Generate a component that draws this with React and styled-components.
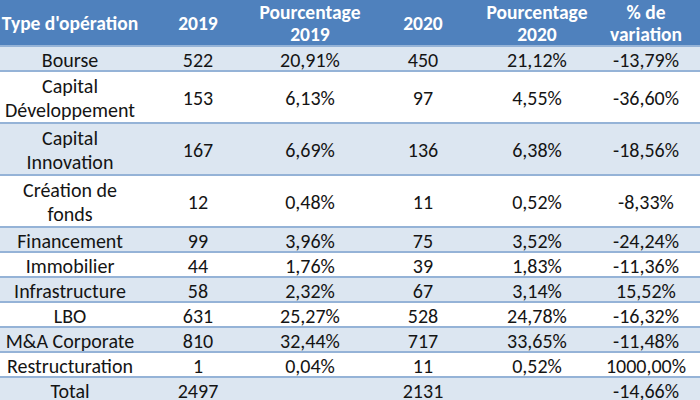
import React from 'react';
import styled, { createGlobalStyle } from 'styled-components';

const GlobalStyle = createGlobalStyle`
  html, body {
    margin: 0;
    padding: 0;
    background: #ffffff;
  }
  body {
    font-family: Carlito, Lato, "Liberation Sans", sans-serif;
  }
`;

const Table = styled.table`
  width: 700px;
  border-collapse: collapse;
  table-layout: fixed;
  font-size: 20px;
  color: #141414;
`;

const HeadRow = styled.tr`
  height: 46px;
  background: #4f81bd;
`;

const HeadCell = styled.th`
  width: ${(p) => p.w}px;
  padding: 1px 0 0;
  color: #ffffff;
  font-size: 19.5px;
  font-weight: 700;
  line-height: 22px;
  text-align: center;
  vertical-align: middle;
  white-space: nowrap;
`;

const Row = styled.tr`
  height: ${(p) => (p.tall ? 51 : 25)}px;
  background: ${(p) => (p.striped ? '#dce6f1' : '#ffffff')};
  border-top: 2px solid #95b3d7;
`;

const Cell = styled.td`
  padding: ${(p) => (p.tall ? 2 : 2)}px 0 0;
  line-height: ${(p) => (p.tall ? 24 : 20)}px;
  text-align: center;
  vertical-align: middle;
  white-space: nowrap;
`;

const widths = [140, 116, 108, 118, 110, 108];

const rows = [
  [['Bourse'], '522', '20,91%', '450', '21,12%', '-13,79%'],
  [['Capital', 'Développement'], '153', '6,13%', '97', '4,55%', '-36,60%'],
  [['Capital', 'Innovation'], '167', '6,69%', '136', '6,38%', '-18,56%'],
  [['Création de', 'fonds'], '12', '0,48%', '11', '0,52%', '-8,33%'],
  [['Financement'], '99', '3,96%', '75', '3,52%', '-24,24%'],
  [['Immobilier'], '44', '1,76%', '39', '1,83%', '-11,36%'],
  [['Infrastructure'], '58', '2,32%', '67', '3,14%', '15,52%'],
  [['LBO'], '631', '25,27%', '528', '24,78%', '-16,32%'],
  [['M&A Corporate'], '810', '32,44%', '717', '33,65%', '-11,48%'],
  [['Restructuration'], '1', '0,04%', '11', '0,52%', '1000,00%'],
  [['Total'], '2497', '', '2131', '', '-14,66%'],
];

const Lines = ({ parts }) =>
  parts.map((t, i) => (
    <React.Fragment key={i}>
      {i > 0 && <br />}
      {t}
    </React.Fragment>
  ));

const App = () => {
  return (
    <>
      <GlobalStyle />
      <Table>
        <thead>
          <HeadRow>
            <HeadCell w={widths[0]}>Type d'opération</HeadCell>
            <HeadCell w={widths[1]}>2019</HeadCell>
            <HeadCell w={widths[2]}>
              Pourcentage
              <br />
              2019
            </HeadCell>
            <HeadCell w={widths[3]}>2020</HeadCell>
            <HeadCell w={widths[4]}>
              Pourcentage
              <br />
              2020
            </HeadCell>
            <HeadCell w={widths[5]}>
              % de
              <br />
              variation
            </HeadCell>
          </HeadRow>
        </thead>
        <tbody>
          {rows.map((r, i) => {
            const tall = r[0].length > 1;
            return (
              <Row key={i} striped={i % 2 === 0} tall={tall}>
                <Cell tall={tall}>
                  <Lines parts={r[0]} />
                </Cell>
                {r.slice(1).map((v, j) => (
                  <Cell key={j} tall={tall}>
                    {v}
                  </Cell>
                ))}
              </Row>
            );
          })}
        </tbody>
      </Table>
    </>
  );
};

export default App;
